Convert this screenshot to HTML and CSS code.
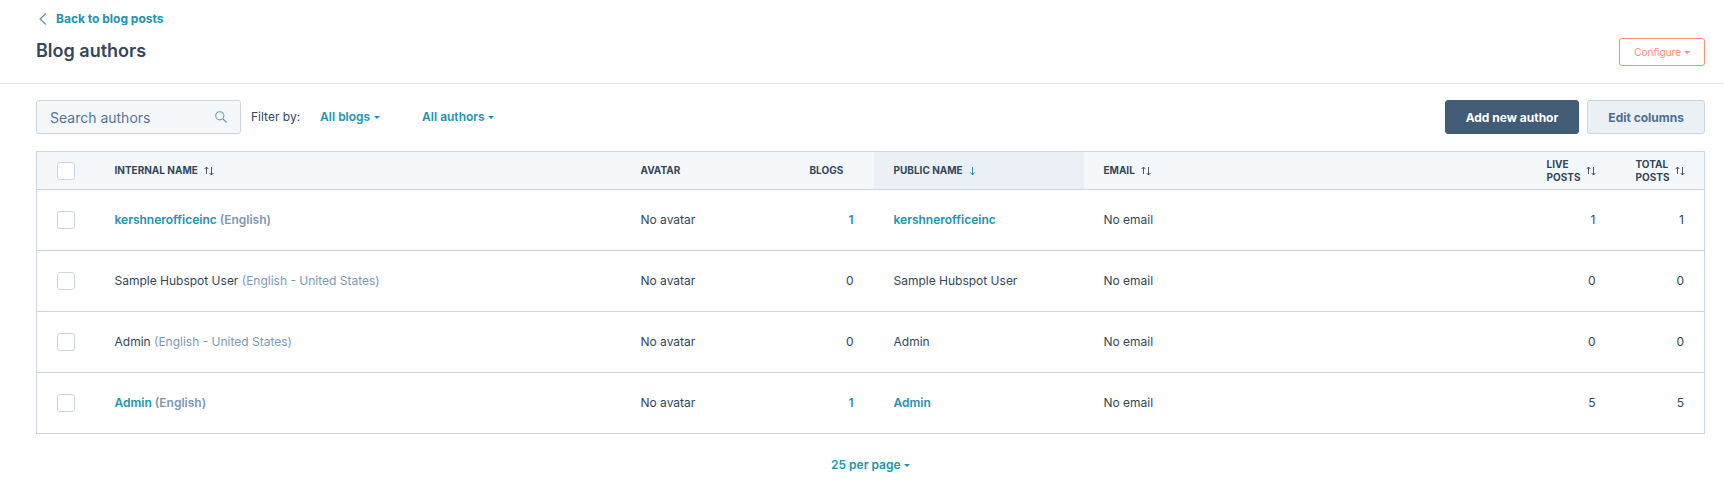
FILE: index.html
```html
<!DOCTYPE html>
<html lang="en">
<head>
    <meta charset="UTF-8">
    <meta name="viewport" content="width=device-width, initial-scale=1.0">
    <title>Blog authors</title>
    <link rel="stylesheet" href="styles.css">
</head>
<body>
    <svg class="sprite" aria-hidden="true">
        <symbol id="sort" viewBox="0 0 10 10">
            <path d="M2.5 8V1.2M0.7 3L2.5 1L4.3 3M7.5 1V8.8M5.7 7L7.5 9L9.3 7" fill="none" stroke="currentColor" stroke-width="0.9"/>
        </symbol>
    </svg>

    <header class="page-header">
        <a class="back-link" href="#">
            <svg class="back-icon" viewBox="0 0 8 12" aria-hidden="true">
                <path d="M6.8 0.5L1.2 6L6.8 11.5" fill="none" stroke="currentColor" stroke-width="1.3"/>
            </svg>
            Back to blog posts
        </a>
        <div class="title-row">
            <h1>Blog authors</h1>
            <button class="btn btn-configure" type="button">Configure <span class="caret"></span></button>
        </div>
    </header>

    <main class="content">
        <div class="toolbar">
            <div class="search">
                <input type="search" placeholder="Search authors" aria-label="Search authors">
                <svg class="search-icon" viewBox="0 0 12 12" aria-hidden="true">
                    <circle cx="4.8" cy="4.8" r="4.1" fill="none" stroke="currentColor" stroke-width="1.1"/>
                    <path d="M7.8 7.8L11.6 11.6" stroke="currentColor" stroke-width="1.3"/>
                </svg>
            </div>
            <span class="filter-label">Filter by:</span>
            <div class="filters">
                <div class="dropdown">
                    <select aria-label="Filter by blog"><option>All blogs</option></select>
                    <span class="caret"></span>
                </div>
                <div class="dropdown">
                    <select aria-label="Filter by author"><option>All authors</option></select>
                    <span class="caret"></span>
                </div>
            </div>
            <div class="actions">
                <button class="btn btn-primary" type="button">Add new author</button>
                <button class="btn btn-secondary" type="button">Edit columns</button>
            </div>
        </div>

        <table class="authors">
            <thead>
                <tr>
                    <th class="col-check"><input type="checkbox" aria-label="Select all authors"></th>
                    <th class="col-name"><div class="head">Internal name <svg class="sort-icon"><use href="#sort"/></svg></div></th>
                    <th class="col-avatar">Avatar</th>
                    <th class="col-blogs">Blogs</th>
                    <th class="col-public sorted">
                        <div class="head">
                            Public name
                            <svg class="sort-icon sort-active" viewBox="0 0 10 10"><path d="M3.5 1V8.8M1.2 6.4L3.5 8.9L5.8 6.4" fill="none" stroke="currentColor"/></svg>
                        </div>
                    </th>
                    <th class="col-email"><div class="head">Email <svg class="sort-icon"><use href="#sort"/></svg></div></th>
                    <th class="col-posts"><div class="head"><span>Live<br>posts</span> <svg class="sort-icon"><use href="#sort"/></svg></div></th>
                    <th class="col-posts"><div class="head"><span>Total<br>posts</span> <svg class="sort-icon"><use href="#sort"/></svg></div></th>
                </tr>
            </thead>
            <tbody>
                <tr>
                    <td><input type="checkbox" aria-label="Select kershnerofficeinc"></td>
                    <td class="strong"><a href="#">kershnerofficeinc</a> <span class="language">(English)</span></td>
                    <td>No avatar</td>
                    <td class="number"><a href="#">1</a></td>
                    <td><a href="#">kershnerofficeinc</a></td>
                    <td>No email</td>
                    <td class="number">1</td>
                    <td class="number">1</td>
                </tr>
                <tr>
                    <td><input type="checkbox" aria-label="Select Sample Hubspot User"></td>
                    <td>Sample Hubspot User <span class="language">(English - United States)</span></td>
                    <td>No avatar</td>
                    <td class="number">0</td>
                    <td>Sample Hubspot User</td>
                    <td>No email</td>
                    <td class="number">0</td>
                    <td class="number">0</td>
                </tr>
                <tr>
                    <td><input type="checkbox" aria-label="Select Admin, United States"></td>
                    <td>Admin <span class="language">(English - United States)</span></td>
                    <td>No avatar</td>
                    <td class="number">0</td>
                    <td>Admin</td>
                    <td>No email</td>
                    <td class="number">0</td>
                    <td class="number">0</td>
                </tr>
                <tr>
                    <td><input type="checkbox" aria-label="Select Admin"></td>
                    <td class="strong"><a href="#">Admin</a> <span class="language">(English)</span></td>
                    <td>No avatar</td>
                    <td class="number"><a href="#">1</a></td>
                    <td><a href="#">Admin</a></td>
                    <td>No email</td>
                    <td class="number">5</td>
                    <td class="number">5</td>
                </tr>
            </tbody>
        </table>

        <div class="pagination">
            <div class="dropdown">
                <select aria-label="Authors per page"><option>25 per page</option></select>
                <span class="caret"></span>
            </div>
        </div>
    </main>
</body>
</html>
```
FILE: styles.css
```css
* {
    box-sizing: border-box;
}

body {
    margin: 0;
    font-family: Inter, "Liberation Sans", sans-serif;
    font-size: 12px;
    line-height: 16px;
    color: #33475b;
    background: #fff;
}

a {
    color: #2094b0;
    font-weight: 600;
    text-decoration: none;
}

a:hover {
    text-decoration: underline;
}

button,
input,
select {
    font-family: inherit;
}

.sprite {
    display: none;
}

.page-header {
    padding: 11px 19px 17px 36px;
    border-bottom: 1px solid #e3e8f0;
}

.back-link {
    display: flex;
    align-items: center;
    gap: 9px;
    width: fit-content;
    padding-left: 3px;
    font-weight: 700;
}

.back-icon {
    width: 8px;
    height: 12px;
    color: #6f8db4;
}

.title-row {
    display: flex;
    align-items: flex-start;
    justify-content: space-between;
    padding-top: 11px;
}

h1 {
    margin: 0;
    font-size: 18px;
    line-height: 26px;
    font-weight: 600;
}

.caret {
    border: 3px solid transparent;
    border-top-color: currentColor;
    border-bottom: 0;
}

.btn {
    height: 34px;
    padding: 0 20px;
    font-size: 12px;
    font-weight: 700;
    border: 1px solid;
    border-radius: 3px;
    cursor: pointer;
}

.btn-configure {
    display: flex;
    align-items: center;
    gap: 3px;
    height: 28px;
    padding: 0 14px;
    font-size: 10px;
    font-weight: 400;
    color: #ff8f73;
    background: #fff;
    border-color: #ff8f73;
}

.btn-primary {
    color: #fff;
    background: #425b76;
    border-color: #425b76;
}

.btn-secondary {
    color: #506e91;
    background: #eaf0f6;
    border-color: #cbd6e2;
}

.content {
    padding: 16px 19px 0 36px;
}

.toolbar {
    display: flex;
    align-items: center;
    margin-bottom: 17px;
}

.search {
    position: relative;
    width: 205px;
}

.search input {
    display: block;
    width: 100%;
    height: 34px;
    padding: 0 36px 0 13px;
    font-size: 14px;
    color: #33475b;
    background: #f5f8fa;
    border: 1px solid #cbd6e2;
    border-radius: 3px;
    appearance: none;
}

.search input::placeholder {
    color: #56749a;
}

.search-icon {
    position: absolute;
    top: 11px;
    right: 14px;
    width: 12px;
    height: 12px;
    color: #7c98b6;
}

.filter-label {
    padding: 0 20px 0 10px;
}

.filters {
    display: flex;
    gap: 42px;
}

.dropdown {
    display: flex;
    align-items: center;
    gap: 3px;
    color: #2094b0;
}

.dropdown select {
    padding: 0;
    font-size: 12px;
    line-height: 16px;
    font-weight: 600;
    color: inherit;
    background: none;
    border: 0;
    appearance: none;
    cursor: pointer;
}

.actions {
    display: flex;
    gap: 8px;
    margin-left: auto;
}

.authors {
    width: 100%;
    table-layout: fixed;
    border-collapse: collapse;
    border: 1px solid #cbd6e2;
}

.authors th,
.authors td {
    padding: 0 20px;
    text-align: left;
    border-bottom: 1px solid #cbd6e2;
}

.authors th {
    height: 38px;
    font-size: 10px;
    line-height: 13px;
    font-weight: 700;
    text-transform: uppercase;
    background: #f5f8fa;
}

.authors .sorted {
    background: #eaf0f6;
}

.authors td {
    height: 61px;
}

.authors .number {
    text-align: right;
}

.col-check {
    width: 58px;
}

.col-name {
    width: 526px;
}

.col-avatar {
    width: 169px;
}

.col-blogs {
    width: 84px;
}

.col-public {
    width: 210px;
}

.col-posts {
    width: 89px;
}

.head {
    display: flex;
    align-items: center;
    gap: 6px;
}

.sort-icon {
    flex: none;
    width: 10px;
    height: 10px;
}

.sort-active {
    color: #2094b0;
}

.strong {
    font-weight: 600;
}

.language {
    color: #7c98b6;
}

.authors input {
    display: block;
    width: 18px;
    height: 18px;
    margin: 0;
    background: #fff;
    border: 1px solid #cbd6e2;
    border-radius: 3px;
    appearance: none;
}

.authors input:checked {
    background: #2094b0;
}

.pagination {
    display: flex;
    justify-content: center;
    padding: 23px 0;
}
```
